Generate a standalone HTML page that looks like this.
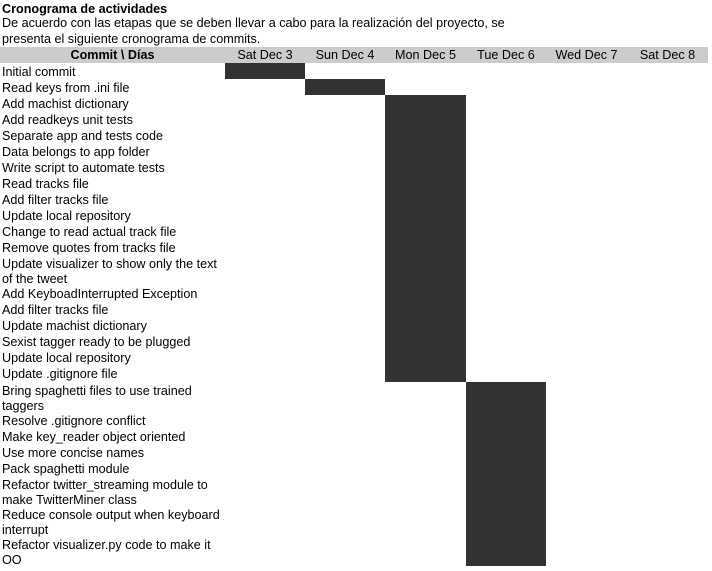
<!DOCTYPE html>
<html><head><meta charset="utf-8"><style>
body{margin:0;width:712px;height:571px;background:#fff;font-family:"Liberation Sans",sans-serif;font-size:12.6px;color:#000;position:relative;overflow:hidden}
.a{position:absolute}
.t{left:2px;top:2px;font-weight:bold;line-height:14px}
.p{left:2px;top:15px;line-height:16px;width:540px}
.h{left:0;top:47px;width:708px;height:16px;background:#cccccc;line-height:16px}
.h div{position:absolute;top:0;text-align:center}
.r{position:absolute;left:2px;width:224px;line-height:15px;margin-top:1px}
.b{position:absolute;background:#333}
</style></head><body>
<div class="a t">Cronograma de actividades</div>
<div class="a p">De acuerdo con las etapas que se deben llevar a cabo para la realización del proyecto, se<br>presenta el siguiente cronograma de commits.</div>
<div class="a h">
<div style="left:0;width:225px;font-weight:bold">Commit \ Días</div>
<div style="left:225px;width:80px">Sat Dec 3</div>
<div style="left:305px;width:80px">Sun Dec 4</div>
<div style="left:385px;width:81px">Mon Dec 5</div>
<div style="left:466px;width:80px">Tue Dec 6</div>
<div style="left:546px;width:81px">Wed Dec 7</div>
<div style="left:627px;width:81px">Sat Dec 8</div>
</div>
<div class="b" style="left:225px;top:63px;width:80px;height:16px"></div>
<div class="b" style="left:305px;top:79px;width:80px;height:16px"></div>
<div class="b" style="left:385px;top:95px;width:81px;height:287px"></div>
<div class="b" style="left:466px;top:382px;width:80px;height:184px"></div>
<div class="r" style="top:64px">Initial commit</div>
<div class="r" style="top:80px">Read keys from .ini file</div>
<div class="r" style="top:96px">Add machist dictionary</div>
<div class="r" style="top:112px">Add readkeys unit tests</div>
<div class="r" style="top:128px">Separate app and tests code</div>
<div class="r" style="top:144px">Data belongs to app folder</div>
<div class="r" style="top:160px">Write script to automate tests</div>
<div class="r" style="top:176px">Read tracks file</div>
<div class="r" style="top:192px">Add filter tracks file</div>
<div class="r" style="top:208px">Update local repository</div>
<div class="r" style="top:224px">Change to read actual track file</div>
<div class="r" style="top:240px">Remove quotes from tracks file</div>
<div class="r" style="top:256px">Update visualizer to show only the text<br>of the tweet</div>
<div class="r" style="top:286px">Add KeyboadInterrupted Exception</div>
<div class="r" style="top:302px">Add filter tracks file</div>
<div class="r" style="top:318px">Update machist dictionary</div>
<div class="r" style="top:334px">Sexist tagger ready to be plugged</div>
<div class="r" style="top:350px">Update local repository</div>
<div class="r" style="top:366px">Update .gitignore file</div>
<div class="r" style="top:383px">Bring spaghetti files to use trained<br>taggers</div>
<div class="r" style="top:413px">Resolve .gitignore conflict</div>
<div class="r" style="top:429px">Make key_reader object oriented</div>
<div class="r" style="top:445px">Use more concise names</div>
<div class="r" style="top:461px">Pack spaghetti module</div>
<div class="r" style="top:477px">Refactor twitter_streaming module to<br>make TwitterMiner class</div>
<div class="r" style="top:507px">Reduce console output when keyboard<br>interrupt</div>
<div class="r" style="top:537px">Refactor visualizer.py code to make it<br>OO</div>
</body></html>
